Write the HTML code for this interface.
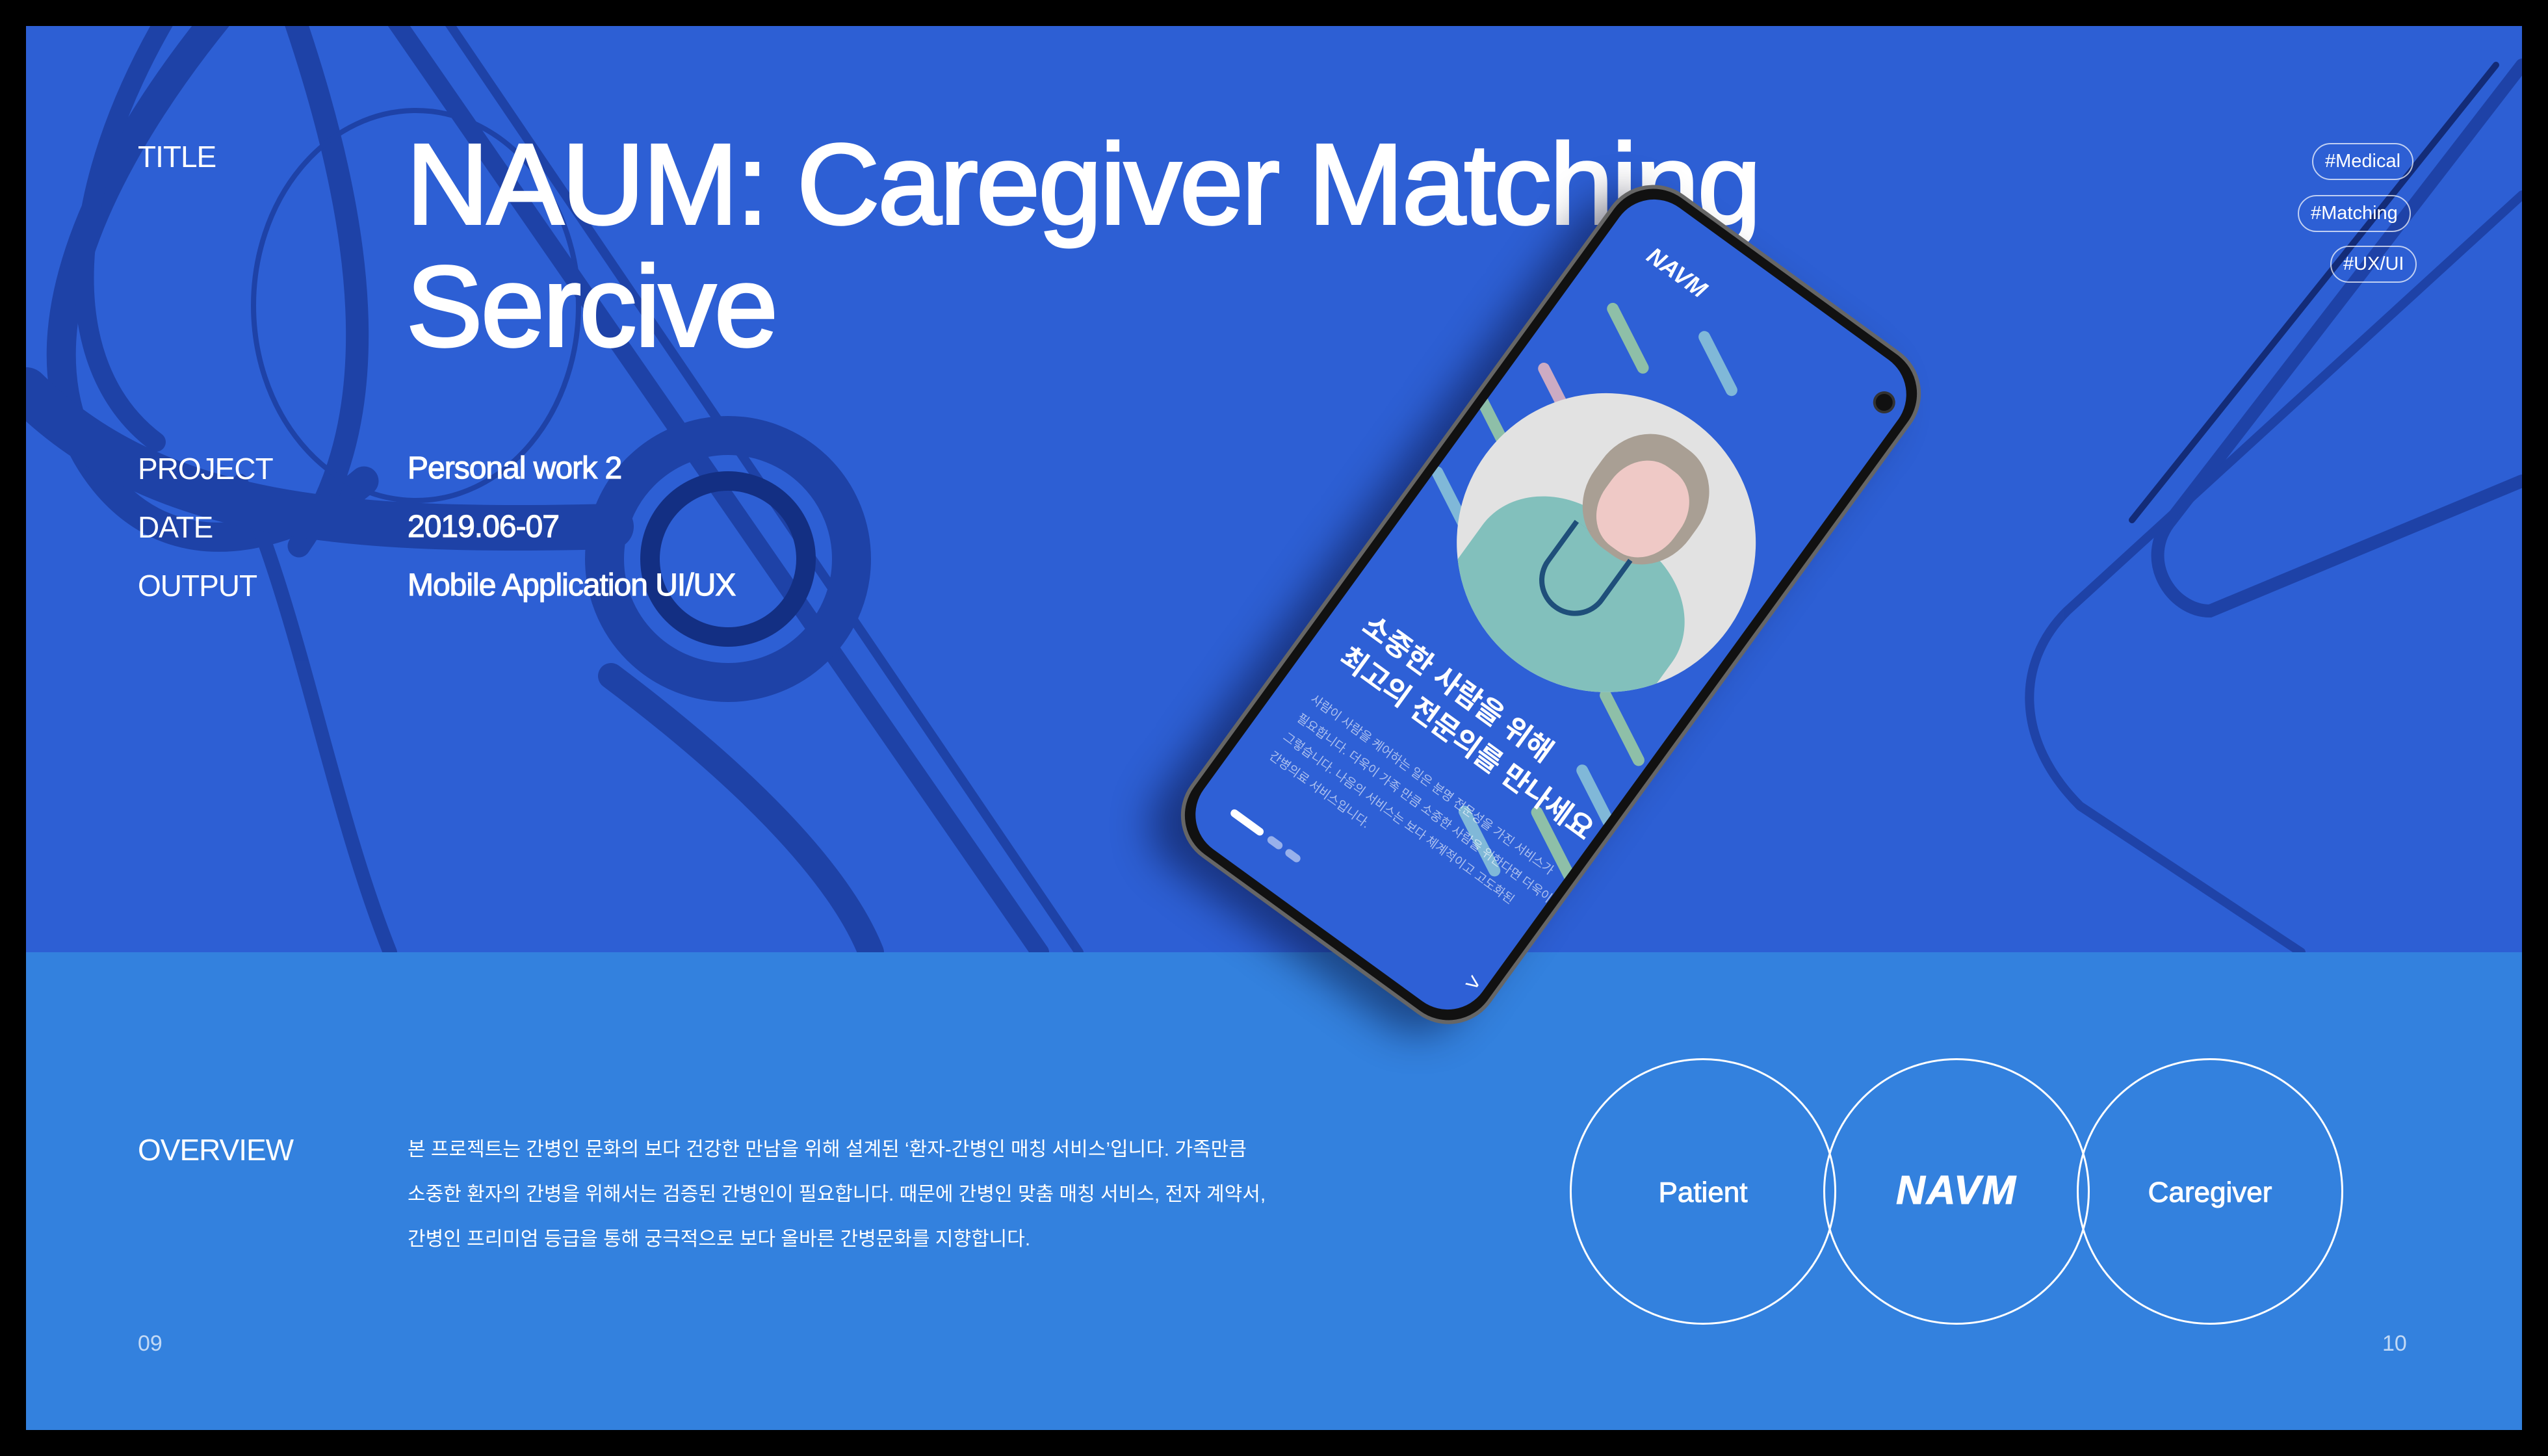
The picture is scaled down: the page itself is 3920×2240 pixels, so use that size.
<!DOCTYPE html>
<html><head><meta charset="utf-8"><style>
*{margin:0;padding:0;box-sizing:border-box}
body{width:3920px;height:2240px;background:#000;position:relative;overflow:hidden;font-family:"Liberation Sans","Noto Sans CJK KR",sans-serif;color:#fff}
#top{position:absolute;left:40px;top:40px;width:3840px;height:1425px;background:#2d5fd4;overflow:hidden}
#bot{position:absolute;left:40px;top:1465px;width:3840px;height:735px;background:#3381de}
.a{position:absolute;white-space:nowrap}
.lab{font-size:46px;letter-spacing:-1px}
.val{font-size:48px;letter-spacing:-1px;-webkit-text-stroke:1.2px #fff}
.tag{position:absolute;border:2px solid rgba(255,255,255,.7);border-radius:30px;font-size:29px;height:57px;line-height:53px;padding:0 18px;color:#fff}
.circ{position:absolute;width:410px;height:410px;border:3px solid #fff;border-radius:50%;top:1628px}
.ct{position:absolute;font-size:44px;top:1810px;width:410px;text-align:center;-webkit-text-stroke:1px #fff}
#phone{position:absolute;left:2101px;top:300px;width:570px;height:1260px;transform:rotate(36deg);border-radius:80px;background:#111;border:6px solid #666;box-shadow:-30px 40px 60px rgba(0,0,30,.45)}
#scr{position:absolute;left:14px;top:14px;right:14px;bottom:14px;border-radius:66px;background:#2e60d6;overflow:hidden}
.st{position:absolute;height:18px;border-radius:9px;transform:rotate(27deg);opacity:.85}
</style></head><body>
<div id="top">
<svg width="3840" height="1425" style="position:absolute;left:0;top:0">
<g fill="none" stroke="#1b3c9c" stroke-linecap="round" opacity=".8">
<path d="M300 -20 C120 200 -40 500 120 700 C250 860 450 760 520 700" stroke-width="45"/>
<path d="M220 -20 C60 250 40 520 200 640" stroke-width="30"/>
<path d="M410 -20 C520 300 560 600 420 800" stroke-width="35"/>
<ellipse cx="600" cy="430" rx="250" ry="300" stroke-width="8"/>
<path d="M560 -20 L1560 1425" stroke-width="28"/>
<path d="M640 -20 L1620 1425" stroke-width="14"/>
<path d="M330 700 C420 900 470 1200 560 1425" stroke-width="22"/>
<path d="M0 560 C200 760 500 780 900 770" stroke-width="70"/>
<path d="M900 1000 C1100 1150 1250 1300 1300 1425" stroke-width="40"/>
<circle cx="1080" cy="820" r="190" stroke-width="60"/>
<circle cx="1080" cy="820" r="120" stroke-width="30" stroke="#0d2470"/>
<path d="M3840 60 L3300 760 C3250 820 3300 900 3360 900 L3840 700" stroke-width="20"/>
<path d="M3800 60 L3240 760" stroke-width="10" stroke="#0d1f60"/>
<path d="M3840 260 L3140 900 C3060 980 3060 1100 3160 1200 L3500 1425" stroke-width="14"/>
</g>
</svg>
</div>
<div id="bot"></div>

<div class="a lab" style="left:212px;top:214px">TITLE</div>
<div class="a" style="left:625px;top:190px;font-size:176px;line-height:188px;letter-spacing:-2.5px;-webkit-text-stroke:4px #fff">NAUM: Caregiver Matching<br>Sercive</div>
<div class="a lab" style="left:212px;top:694px">PROJECT</div>
<div class="a lab" style="left:212px;top:784px">DATE</div>
<div class="a lab" style="left:212px;top:874px">OUTPUT</div>
<div class="a val" style="left:627px;top:693px">Personal work 2</div>
<div class="a val" style="left:627px;top:783px">2019.06-07</div>
<div class="a val" style="left:627px;top:873px">Mobile Application UI/UX</div>

<div class="tag" style="left:3557px;top:220px">#Medical</div>
<div class="tag" style="left:3535px;top:300px">#Matching</div>
<div class="tag" style="left:3585px;top:378px">#UX/UI</div>

<div id="phone"><div id="scr">
<div class="st" style="left:60px;top:200px;width:120px;background:#9fd0a0"></div>
<div class="st" style="left:30px;top:330px;width:90px;background:#e8b8c0"></div>
<div class="st" style="left:-20px;top:440px;width:150px;background:#9fd0a0"></div>
<div class="st" style="left:200px;top:150px;width:110px;background:#8ec8d8"></div>
<div class="st" style="left:-10px;top:560px;width:110px;background:#8ec8d8"></div>
<div class="st" style="left:400px;top:690px;width:130px;background:#9fd0a0"></div>
<div class="st" style="left:440px;top:800px;width:110px;background:#8ec8d8"></div>
<div class="st" style="left:420px;top:900px;width:140px;background:#9fd0a0"></div>
<div class="st" style="left:330px;top:960px;width:120px;background:#8ec8d8"></div>
<div style="position:absolute;left:48px;top:253px;width:460px;height:460px;border-radius:50%;background:#e2e2e2;overflow:hidden">
<div style="position:absolute;left:60px;top:200px;width:360px;height:300px;border-radius:40% 40% 0 0;background:#82c0bc"></div>
<div style="position:absolute;left:150px;top:40px;width:180px;height:200px;border-radius:45%;background:#a99f94"></div>
<div style="position:absolute;left:180px;top:80px;width:130px;height:150px;border-radius:45%;background:#efc9c6"></div>
<div style="position:absolute;left:170px;top:230px;width:110px;height:130px;border:8px solid #1f4f7a;border-top:none;border-radius:0 0 60px 60px"></div>
</div>
<div class="a" style="left:51px;top:770px;font-size:44px;font-weight:bold;line-height:60px">소중한 사람을 위해<br>최고의 전문의를 만나세요</div>
<div class="a" style="left:52px;top:925px;font-size:19px;line-height:36px;color:rgba(255,255,255,.6)">사람이 사람을 케어하는 일은 분명 전문성을 가진 서비스가<br>필요합니다. 더욱이 가족 만큼 소중한 사람을 위한다면 더욱이<br>그렇습니다. 나음의 서비스는 보다 체계적이고 고도화된<br>간병의료 서비스입니다.</div>
<div class="a" style="left:70px;top:62px;font-size:36px;font-weight:bold;font-style:italic">NAVM</div>
<div style="position:absolute;left:480px;top:40px;width:34px;height:34px;border-radius:50%;background:#111;border:4px solid #333"></div>
<div style="position:absolute;left:54px;top:1150px;width:60px;height:12px;border-radius:6px;background:#fff"></div>
<div style="position:absolute;left:124px;top:1150px;width:26px;height:12px;border-radius:6px;background:rgba(255,255,255,.5)"></div>
<div style="position:absolute;left:158px;top:1150px;width:26px;height:12px;border-radius:6px;background:rgba(255,255,255,.5)"></div>
<div class="a" style="left:500px;top:1130px;font-size:36px">&gt;</div>
</div></div>

<div class="a lab" style="left:212px;top:1742px">OVERVIEW</div>
<div class="a" style="left:627px;top:1734px;font-size:30px;line-height:69px">본 프로젝트는 간병인 문화의 보다 건강한 만남을 위해 설계된 ‘환자-간병인 매칭 서비스’입니다. 가족만큼<br>소중한 환자의 간병을 위해서는 검증된 간병인이 필요합니다. 때문에 간병인 맞춤 매칭 서비스, 전자 계약서,<br>간병인 프리미엄 등급을 통해 궁극적으로 보다 올바른 간병문화를 지향합니다.</div>

<div class="circ" style="left:2415px"></div>
<div class="circ" style="left:2805px"></div>
<div class="circ" style="left:3195px"></div>
<div class="ct" style="left:2415px">Patient</div>
<div class="ct" style="left:2805px;font-weight:bold;font-size:62px;top:1796px;font-style:italic;letter-spacing:2px">NAVM</div>
<div class="ct" style="left:3195px">Caregiver</div>

<div class="a" style="left:212px;top:2048px;font-size:34px;color:rgba(255,255,255,.7)">09</div>
<div class="a" style="left:3665px;top:2048px;font-size:34px;color:rgba(255,255,255,.7)">10</div>
</body></html>
